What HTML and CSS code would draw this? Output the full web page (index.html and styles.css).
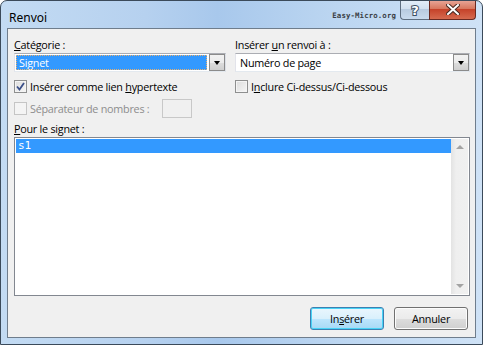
FILE: index.html
```html
<!DOCTYPE html>
<html lang="fr">
<head>
    <meta charset="UTF-8">
    <title>Renvoi</title>
    <link rel="stylesheet" href="styles.css">
</head>
<body>
    <div class="window">
        <!-- Title bar -->
        <div class="titlebar">
            <span class="title">Renvoi</span>
            <span class="brand">Easy-Micro.org</span>
            <div class="caption-btns">
                <div class="cap-btn help"><span class="q">?</span></div>
                <div class="cap-btn close">
                    <svg width="14" height="11" viewBox="0 0 14 11">
                        <path d="M2 1 L12 10 M12 1 L2 10" stroke="#4a2a22" stroke-width="4" stroke-linecap="square"/>
                        <path d="M2 1 L12 10 M12 1 L2 10" stroke="#fff" stroke-width="2" stroke-linecap="square"/>
                    </svg>
                </div>
            </div>
        </div>

        <!-- Client area -->
        <div class="client">
            <div class="columns">
                <div class="col">
                    <label class="lbl"><u>C</u>atégorie :</label>
                    <div class="combo">
                        <div class="combo-value selected"><span class="focus">Signet</span></div>
                        <div class="combo-arrow"><span class="tri"></span></div>
                    </div>
                    <div class="check-row">
                        <span class="box checked">
                            <svg width="9" height="9" viewBox="0 0 9 9"><path d="M1 4.5 L3.5 7.5 L8 1" fill="none" stroke="#3a4f88" stroke-width="1.8"/></svg>
                        </span>
                        <span>Insérer comme lien <u>h</u>ypertexte</span>
                    </div>
                    <div class="check-row disabled">
                        <span class="box"></span>
                        <span>Séparateur de nombres :</span>
                        <span class="sep-input"></span>
                    </div>
                </div>
                <div class="col">
                    <label class="lbl">Insérer <u>u</u>n renvoi à :</label>
                    <div class="combo">
                        <div class="combo-value">Numéro de page</div>
                        <div class="combo-arrow"><span class="tri"></span></div>
                    </div>
                    <div class="check-row">
                        <span class="box"></span>
                        <span>I<u>n</u>clure Ci-dessus/Ci-dessous</span>
                    </div>
                </div>
            </div>

            <label class="lbl list-lbl"><u>P</u>our le signet :</label>
            <div class="listbox">
                <div class="items">
                    <div class="item selected">s1</div>
                </div>
                <div class="scrollbar">
                    <span class="sb-up"></span>
                    <span class="sb-down"></span>
                </div>
            </div>

            <div class="actions">
                <button class="btn default">In<u>s</u>érer</button>
                <button class="btn">Annuler</button>
            </div>
        </div>
    </div>
</body>
</html>
```

FILE: styles.css
```css
/* Base */
html, body {
    margin: 0;
    padding: 0;
    background: #ffffff;
}

body {
    font-family: "Open Sans", "Noto Sans", sans-serif;
    font-size: 10.8px;
    letter-spacing: -0.25px;
    color: #000;
}

u {
    text-decoration: underline;
    text-underline-offset: 1px;
}

/* Window frame */
.window {
    width: 483px;
    height: 345px;
    box-sizing: border-box;
    border: 1px solid #3b4a5a;
    border-radius: 7px 7px 0 0;
    background: linear-gradient(90deg, #c3dbf3 0%, #b6d1ef 30%, #a8c8ec 45%, #bcd6f1 70%, #cfe2f6 100%);
    display: flex;
    flex-direction: column;
    padding: 0 6px 6px 6px;
    overflow: hidden;
}

/* Title bar */
.titlebar {
    height: 27px;
    display: flex;
    align-items: flex-start;
}

.title {
    font-family: "Noto Sans", sans-serif;
    font-size: 12px;
    letter-spacing: 0;
    margin: 8px 0 0 2px;
    color: #000;
}

.brand {
    font-family: "DejaVu Sans Mono", monospace;
    font-weight: bold;
    font-size: 7.4px;
    letter-spacing: 0.1px;
    color: #3a3f45;
    margin: 10px 0 0 auto;
}

.caption-btns {
    display: flex;
    margin-left: 4px;
    margin-top: -1px;
}

.cap-btn {
    height: 20px;
    box-sizing: border-box;
    border: 1px solid #5e6e80;
    border-top: none;
    display: flex;
    align-items: center;
    justify-content: center;
}

.help {
    width: 29px;
    border-radius: 0 0 0 4px;
    border-right: none;
    background: linear-gradient(#e4eef9 0%, #d3e1f0 45%, #b8cbe0 50%, #c9dbee 100%);
}

.q {
    font-family: "DejaVu Sans", sans-serif;
    font-weight: bold;
    font-size: 13px;
    line-height: 13px;
    letter-spacing: 0;
    color: #fff;
    -webkit-text-stroke: 2px #3d4f63;
    paint-order: stroke fill;
    margin-top: 1px;
}

.close {
    width: 47px;
    border-radius: 0 0 4px 0;
    border-color: #6a2a22;
    background: linear-gradient(#e9a99b 0%, #d8785f 45%, #c6432a 50%, #d66a4f 100%);
}

/* Client area */
.client {
    flex: 1;
    background: #f0f0f0;
    border: 1px solid #6f7d8c;
    padding: 8px 5px 7px 6px;
    display: flex;
    flex-direction: column;
}

.columns {
    display: grid;
    grid-template-columns: 212px 235px;
    column-gap: 9px;
}

.col {
    display: flex;
    flex-direction: column;
}

.lbl {
    display: block;
    line-height: 15px;
    height: 15px;
}

/* Combo box */
.combo {
    margin-top: 1px;
    height: 19px;
    box-sizing: border-box;
    border: 1px solid #abadb3;
    border-color: #abadb3 #dbdfe6 #e3e9ef #e2e3ea;
    background: #fff;
    display: flex;
    padding: 1px;
}

.combo-value {
    flex: 1;
    padding-left: 3px;
    line-height: 15px;
}

.combo-value.selected {
    background: #3399ff;
    color: #fff;
    padding: 0;
    margin-right: 2px;
    outline: 1px dotted #e9b06e;
    outline-offset: -1px;
}

.combo-value.selected .focus {
    padding-left: 3px;
}

.combo-arrow {
    width: 16px;
    box-sizing: border-box;
    border: 1px solid #8b8b8b;
    background: linear-gradient(#f2f2f2 0%, #ebebeb 50%, #dddddd 51%, #cfcfcf 100%);
    display: flex;
    align-items: center;
    justify-content: center;
    margin: -1px -1px -1px 0;
}

.tri {
    width: 0;
    height: 0;
    border-left: 3.5px solid transparent;
    border-right: 3.5px solid transparent;
    border-top: 4px solid #000;
}

/* Check boxes */
.check-row {
    display: flex;
    align-items: center;
    height: 13px;
    margin-top: 8px;
}

.check-row.disabled {
    color: #8d8d8d;
    margin-top: 9px;
}

.box {
    width: 13px;
    height: 13px;
    box-sizing: border-box;
    border: 1px solid #8e8f8f;
    background: linear-gradient(135deg, #dcdcdc 0%, #f6f6f6 100%);
    box-shadow: inset 0 0 0 1px #f4f4f4;
    margin-right: 3px;
    display: flex;
    align-items: center;
    justify-content: center;
}

.disabled .box {
    border-color: #c5c5c5;
    background: #f4f4f4;
}

.sep-input {
    width: 30px;
    height: 19px;
    box-sizing: border-box;
    border: 1px solid #c8c8c8;
    background: #f0f0f0;
    margin-left: 13px;
}

/* List box */
.list-lbl {
    margin-top: 6px;
}

.listbox {
    margin-top: 1px;
    width: 456px;
    height: 159px;
    box-sizing: border-box;
    border: 1px solid #828790;
    background: #fff;
    display: flex;
    padding: 1px;
}

.items {
    flex: 1;
}

.item {
    font-family: "DejaVu Sans Mono", monospace;
    font-size: 11px;
    letter-spacing: 0;
    line-height: 14px;
    padding-left: 2px;
}

.item.selected {
    background: #3399ff;
    color: #fff;
}

.scrollbar {
    width: 17px;
    background: linear-gradient(90deg, #e3e3e3, #efefef 30%, #f0f0f0);
    display: flex;
    flex-direction: column;
    justify-content: space-between;
    align-items: center;
    padding: 6px 0;
    box-sizing: border-box;
}

.sb-up, .sb-down {
    width: 0;
    height: 0;
    border-left: 4px solid transparent;
    border-right: 4px solid transparent;
}

.sb-up {
    border-bottom: 4px solid #a3a3a3;
}

.sb-down {
    border-top: 4px solid #a3a3a3;
}

/* Buttons */
.actions {
    margin-top: 11px;
    display: flex;
    justify-content: flex-end;
    gap: 10px;
    padding-right: 2px;
}

.btn {
    width: 74px;
    height: 23px;
    font-family: inherit;
    font-size: 10.8px;
    letter-spacing: -0.25px;
    color: #000;
    border: 1px solid #707070;
    border-radius: 3px;
    background: linear-gradient(#f2f2f2 0%, #ebebeb 50%, #dddddd 51%, #cfcfcf 100%);
    box-shadow: inset 0 0 0 1px #fcfcfc;
    padding: 0;
}

.btn.default {
    border-color: #3c7fb1;
    box-shadow: inset 0 0 0 1px #48d3f6;
    background: linear-gradient(#eaf6fd 0%, #d9f0fc 50%, #bee6fd 51%, #a7d9f5 100%);
}
```
